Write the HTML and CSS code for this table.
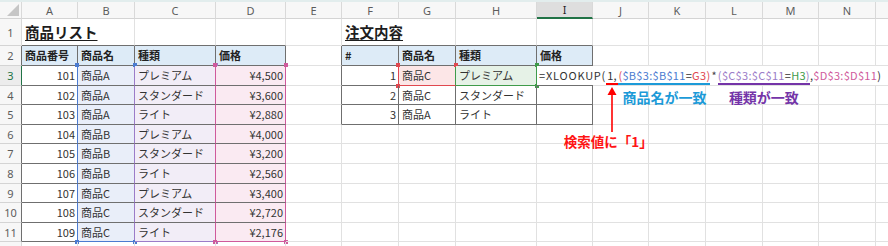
FILE: index.html
```
<!DOCTYPE html>
<html lang="ja">
<head>
<meta charset="utf-8">
<title>XLOOKUP 複数条件</title>
<link rel="stylesheet" href="styles.css">
</head>
<body>
<div class="strip"></div>
<div class="sheet">
  <!-- column headers -->
  <div class="c corner"></div>
  <div class="c ch">A</div><div class="c ch">B</div><div class="c ch">C</div><div class="c ch">D</div>
  <div class="c ch">E</div><div class="c ch">F</div><div class="c ch">G</div><div class="c ch">H</div>
  <div class="c ch sel">I</div><div class="c ch">J</div><div class="c ch">K</div><div class="c ch">L</div>
  <div class="c ch">M</div><div class="c ch">N</div><div class="c ch"></div>

  <!-- row 1 -->
  <div class="c rh">1</div>
  <div class="c title db s2">商品リスト</div>
  <div class="c db"></div><div class="c db"></div>
  <div class="c"></div>
  <div class="c title db s2">注文内容</div>
  <div class="c db"></div><div class="c db"></div>
  <div class="c"></div><div class="c"></div><div class="c"></div><div class="c"></div><div class="c"></div><div class="c"></div>

  <!-- row 2 -->
  <div class="c rh dr">2</div>
  <div class="c t h">商品番号</div><div class="c t h">商品名</div><div class="c t h">種類</div><div class="c t h">価格</div>
  <div class="c dr"></div>
  <div class="c t h">#</div><div class="c t h">商品名</div><div class="c t h">種類</div><div class="c t h">価格</div>
  <div class="c"></div><div class="c"></div><div class="c"></div><div class="c"></div><div class="c"></div><div class="c"></div>

  <!-- row 3 -->
  <div class="c rh dr sel">3</div>
  <div class="c t r ea">101</div>
  <div class="c t rb"><i class="hd tl hb"></i><i class="hd tr hb"></i>商品A</div>
  <div class="c t rc"><i class="hd tr hp"></i>プレミアム</div>
  <div class="c t r rd"><i class="hd tl hk"></i><i class="hd tr hk"></i>¥4,500</div>
  <div class="c dr"></div>
  <div class="c t r ef">1</div>
  <div class="c t rg"><i class="hd tl hr"></i><i class="hd bl hr"></i><i class="hd tr hr"></i>商品C</div>
  <div class="c t rhh"><i class="hd tr hg"></i><i class="hd br hg"></i>プレミアム</div>
  <div class="c t edit"><div class="fx"><span class="fn">=XLOOKUP(</span><span class="u1">1,<svg class="arr" width="10" height="45" viewBox="0 0 10 45"><polygon points="5,0 9.5,8 0.5,8" fill="#ff0000"/><line x1="5" y1="6" x2="5" y2="45" stroke="#ff0000" stroke-width="1.6"/></svg><span class="lbl lred">検索値に「1」</span></span><span class="u2"><span class="fr">(</span><span class="fb">$B$3:$B$11</span>=<span class="fr">G3</span><span class="fr">)</span><span class="lbl lblue">商品名が一致</span></span><span class="op">*</span><span class="u3"><span class="fp">(</span><span class="fp">$C$3:$C$11</span>=<span class="fg">H3</span><span class="fp">)</span><span class="lbl lpur">種類が一致</span></span>,<span class="fk">$D$3:$D$11</span>)</div></div>
  <div class="c"></div><div class="c"></div><div class="c"></div><div class="c"></div><div class="c"></div><div class="c"></div>

  <!-- row 4 -->
  <div class="c rh dr">4</div>
  <div class="c t r ea">102</div><div class="c t rb">商品A</div><div class="c t rc">スタンダード</div><div class="c t r rd">¥3,600</div>
  <div class="c dr"></div>
  <div class="c t r">2</div><div class="c t">商品C</div><div class="c t">スタンダード</div><div class="c t"></div>
  <div class="c"></div><div class="c"></div><div class="c"></div><div class="c"></div><div class="c"></div><div class="c"></div>

  <!-- row 5 -->
  <div class="c rh dr">5</div>
  <div class="c t r ea">103</div><div class="c t rb">商品A</div><div class="c t rc">ライト</div><div class="c t r rd">¥2,880</div>
  <div class="c dr"></div>
  <div class="c t r">3</div><div class="c t">商品A</div><div class="c t">ライト</div><div class="c t"></div>
  <div class="c"></div><div class="c"></div><div class="c"></div><div class="c"></div><div class="c"></div><div class="c"></div>

  <!-- row 6 -->
  <div class="c rh dr">6</div>
  <div class="c t r ea">104</div><div class="c t rb">商品B</div><div class="c t rc">プレミアム</div><div class="c t r rd">¥4,000</div>
  <div class="c"></div><div class="c"></div><div class="c"></div><div class="c"></div><div class="c"></div>
  <div class="c"></div><div class="c"></div><div class="c"></div><div class="c"></div><div class="c"></div><div class="c"></div>

  <!-- row 7 -->
  <div class="c rh dr">7</div>
  <div class="c t r ea">105</div><div class="c t rb">商品B</div><div class="c t rc">スタンダード</div><div class="c t r rd">¥3,200</div>
  <div class="c"></div><div class="c"></div><div class="c"></div><div class="c"></div><div class="c"></div>
  <div class="c"></div><div class="c"></div><div class="c"></div><div class="c"></div><div class="c"></div><div class="c"></div>

  <!-- row 8 -->
  <div class="c rh dr">8</div>
  <div class="c t r ea">106</div><div class="c t rb">商品B</div><div class="c t rc">ライト</div><div class="c t r rd">¥2,560</div>
  <div class="c"></div><div class="c"></div><div class="c"></div><div class="c"></div><div class="c"></div>
  <div class="c"></div><div class="c"></div><div class="c"></div><div class="c"></div><div class="c"></div><div class="c"></div>

  <!-- row 9 -->
  <div class="c rh dr">9</div>
  <div class="c t r ea">107</div><div class="c t rb">商品C</div><div class="c t rc">プレミアム</div><div class="c t r rd">¥3,400</div>
  <div class="c"></div><div class="c"></div><div class="c"></div><div class="c"></div><div class="c"></div>
  <div class="c"></div><div class="c"></div><div class="c"></div><div class="c"></div><div class="c"></div><div class="c"></div>

  <!-- row 10 -->
  <div class="c rh dr">10</div>
  <div class="c t r ea">108</div><div class="c t rb">商品C</div><div class="c t rc">スタンダード</div><div class="c t r rd">¥2,720</div>
  <div class="c"></div><div class="c"></div><div class="c"></div><div class="c"></div><div class="c"></div>
  <div class="c"></div><div class="c"></div><div class="c"></div><div class="c"></div><div class="c"></div><div class="c"></div>

  <!-- row 11 -->
  <div class="c rh dr">11</div>
  <div class="c t r ea">109</div>
  <div class="c t rb bbb"><i class="hd bl hb"></i><i class="hd br hb"></i>商品C</div>
  <div class="c t rc bbp"><i class="hd br hp"></i>ライト</div>
  <div class="c t r rd bbk"><i class="hd bl hk"></i><i class="hd br hk"></i>¥2,176</div>
  <div class="c"></div><div class="c"></div><div class="c"></div><div class="c"></div><div class="c"></div>
  <div class="c"></div><div class="c"></div><div class="c"></div><div class="c"></div><div class="c"></div><div class="c"></div>

  <!-- row 12 (partial, label out of view) -->
  <div class="c rh"></div>
  <div class="c"></div><div class="c"></div><div class="c"></div><div class="c"></div><div class="c"></div>
  <div class="c"></div><div class="c"></div><div class="c"></div><div class="c"></div><div class="c"></div>
  <div class="c"></div><div class="c"></div><div class="c"></div><div class="c"></div><div class="c"></div>
</div>
</body>
</html>
```

FILE: styles.css
```
* { box-sizing: border-box; margin: 0; padding: 0; }
html, body { background: #fff; }
body {
  width: 888px;
  height: 246px;
  overflow: hidden;
  font-family: "Noto Sans CJK JP", "Noto Sans", sans-serif;
  color: #333;
}
.strip { height: 2px; background: #e2eded; }

.sheet {
  display: grid;
  grid-template-columns: 22px 56px 57px 81px 70px 56px 57px 57px 81px 56px 56px 57px 57px 56px 57px 30px;
  grid-template-rows: 17px 27px 20px 20px 19px 20px 19px 20px 20px 19px 20px 19px 12px;
  font-size: 11px;
}

.c {
  position: relative;
  display: flex;
  align-items: center;
  min-width: 0;
  padding: 0 3px;
  white-space: nowrap;
  border-right: 1px solid #e1e1e1;
  border-bottom: 1px solid #e1e1e1;
  line-height: 1;
}
.r { justify-content: flex-end; padding-right: 2px; }
.s2 { grid-column: span 2; }

/* headers */
.corner, .ch, .rh {
  background: #f7f7f7;
  color: #5c5c5c;
  font-family: "Noto Sans", "Noto Sans CJK JP", sans-serif;
  font-size: 11px;
  justify-content: center;
  border-right-color: #d9d9d9;
  border-bottom-color: #d4d4d4;
  padding: 0;
}
.corner::after {
  content: "";
  position: absolute;
  right: 2px;
  bottom: 2px;
  width: 12px;
  height: 12px;
  background: #c6c6c6;
  clip-path: polygon(100% 0, 100% 100%, 0 100%);
}
.ch.sel {
  background: #dedede;
  color: #1f1f1f;
  border-bottom: 2px solid #217346;
}
.rh.sel {
  background: #ececec;
  color: #217346;
  border-right: 1px solid #217346;
}

/* titles */
.title {
  font-size: 14.5px;
  font-weight: 700;
  color: #1e1e1e;
  text-decoration: underline;
  text-underline-offset: 2px;
  padding-left: 3px;
}

/* table borders */
.t { border-right-color: #6f6f6f; border-bottom-color: #6f6f6f; }
.dr { border-right-color: #6f6f6f; }
.db { border-bottom-color: #6f6f6f; }
.h { background: #ddebf7; font-weight: 700; color: #222; }

/* reference ranges (formula edit mode) */
.ea { border-right-color: #4b7bd0; }
.rb { background: #e9eef9; border-right-color: #9b7cc8; }
.rc { background: #f2edf7; border-right-color: #cf5a9c; }
.rd { background: #faeaf2; border-right-color: #cf5a9c; }
.bbb { border-bottom-color: #4b7bd0; }
.bbp { border-bottom-color: #9b7cc8; }
.bbk { border-bottom-color: #cf5a9c; }
.ef { border-right-color: #e0484f; }
.rg { background: #fce6e7; border-right-color: #3f9b4a; border-bottom-color: #e0484f; }
.rhh { background: #e6f2e7; border-right-color: #3f9b4a; border-bottom-color: #3f9b4a; }

.hd { position: absolute; width: 4px; height: 4px; }
.hd.tl { left: -3px; top: -3px; }
.hd.tr { right: -3px; top: -3px; }
.hd.bl { left: -3px; bottom: -3px; }
.hd.br { right: -3px; bottom: -3px; }
.hb { background: #4b7bd0; }
.hp { background: #9b7cc8; }
.hk { background: #cf5a9c; }
.hr { background: #e0484f; }
.hg { background: #3f9b4a; }

/* editing cell with overflowing formula */
.edit { padding: 0; align-items: stretch; }
.fx {
  position: relative;
  z-index: 3;
  flex: none;
  background: #fff;
  padding: 0 3px 0 2px;
  line-height: 19px;
  height: 19px;
  color: #333;
  letter-spacing: 0.3px;
}
.fx span { position: relative; }
.fx .fn { letter-spacing: 0.8px; }
.fx .op { margin: 0 1px; color: #444; }
.fb { color: #4b7bd0; }
.fr { color: #e0484f; }
.fp { color: #9b7cc8; }
.fg { color: #3f9b4a; }
.fk { color: #cf5a9c; }

.u1 { border-bottom: 2px solid #ff0000; padding: 0 1.5px 0 1px; }
.u2 { border-bottom: 2px solid #1c9ad8; }
.u3 { border-bottom: 2px solid #7434a8; }

.arr {
  position: absolute;
  left: 50%;
  top: 100%;
  margin-top: 4px;
  transform: translateX(-50%);
}
.fx .lbl {
  position: absolute;
  left: 50%;
  top: 100%;
  transform: translateX(-50%);
  margin-top: 5px;
  font-size: 14px;
  font-weight: 700;
  line-height: 18px;
  letter-spacing: 0;
  white-space: nowrap;
}
.fx .lred {
  color: #ff1414;
  font-size: 13.5px;
  margin-top: 50px;
  line-height: 16px;
  transform: translateX(calc(-50% - 4px));
}
.lblue { color: #1c9ad8; }
.lpur { color: #7434a8; }
```
